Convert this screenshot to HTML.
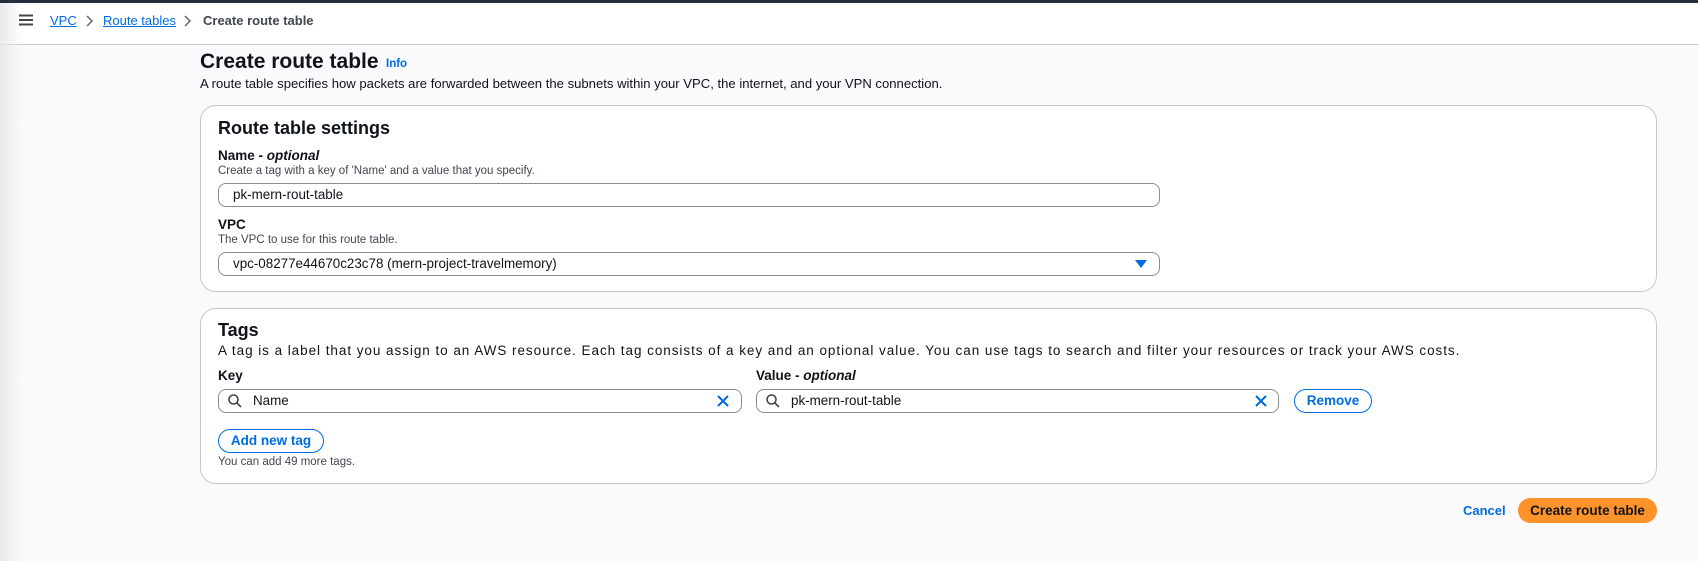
<!DOCTYPE html>
<html><head><meta charset="utf-8"><style>
*{box-sizing:border-box;margin:0;padding:0}
body{width:1698px;height:561px;overflow:hidden;background:#fafafc;font-family:"Liberation Sans",sans-serif;color:#0f141a;position:relative}
.a{position:absolute;white-space:nowrap}
.side{position:absolute;left:0;top:3px;width:22px;height:558px;background:linear-gradient(90deg,#e9e9ec,rgba(250,250,252,0))}
.top{position:absolute;left:0;top:0;width:1698px;height:3px;background:#232f3e}
.hdr{position:absolute;left:0;top:3px;width:1698px;height:42px;background:#fff;border-bottom:1px solid #c6c6cd}
.card{position:absolute;left:200px;width:1457px;background:#fff;border:1px solid #c6c6cd;border-radius:16px}
.inp{position:absolute;background:#fff;border:1px solid #8c8c94;border-radius:8px;height:24px;font-size:13.4px;line-height:22px}
.lbl{font-size:13.5px;font-weight:bold}
.hint{font-size:11.5px;color:#424650}
.btn{position:absolute;border:1.5px solid #006ce0;border-radius:20px;color:#006ce0;font-weight:bold;font-size:13.5px;text-align:center;background:#fff}
</style></head><body>
<div class="top"></div>
<div class="hdr"></div>
<div class="side"></div>
<svg class="a" style="left:19px;top:14px" width="14" height="12"><path d="M0 1.5H14M0 6H14M0 10.5H14" stroke="#424650" stroke-width="2"/></svg>
<div class="a" style="left:50px;top:13px;font-size:13px;color:#006ce0;text-decoration:underline">VPC</div>
<svg class="a" style="left:86px;top:15px" width="8" height="12"><path d="M1 1L6 6L1 11" stroke="#656871" stroke-width="1.5" fill="none"/></svg>
<div class="a" style="left:103px;top:13px;font-size:13px;color:#006ce0;text-decoration:underline">Route tables</div>
<svg class="a" style="left:184px;top:15px" width="8" height="12"><path d="M1 1L6 6L1 11" stroke="#656871" stroke-width="1.5" fill="none"/></svg>
<div class="a" style="left:203px;top:13px;font-size:13px;font-weight:bold;color:#424650">Create route table</div>

<div class="a" style="left:200px;top:50px;font-size:21px;font-weight:bold">Create route table</div>
<div class="a" style="left:386px;top:58px;font-size:11.5px;font-weight:bold;color:#006ce0">Info</div>
<div class="a" style="left:200px;top:76px;font-size:13.1px">A route table specifies how packets are forwarded between the subnets within your VPC, the internet, and your VPN connection.</div>

<div class="card" style="top:105px;height:187px"></div>
<div class="a" style="left:218px;top:118px;font-size:18px;font-weight:bold">Route table settings</div>
<div class="a lbl" style="left:218px;top:148px">Name - <i>optional</i></div>
<div class="a hint" style="left:218px;top:165px">Create a tag with a key of 'Name' and a value that you specify.</div>
<div class="inp" style="left:218px;top:183px;width:942px;padding-left:14px">pk-mern-rout-table</div>
<div class="a lbl" style="left:218px;top:217px">VPC</div>
<div class="a hint" style="left:218px;top:234px">The VPC to use for this route table.</div>
<div class="inp" style="left:218px;top:252px;width:942px;padding-left:14px">vpc-08277e44670c23c78 (mern-project-travelmemory)</div>
<svg class="a" style="left:1135px;top:260px" width="12" height="9"><path d="M0 0H12L6 8Z" fill="#006ce0"/></svg>

<div class="card" style="top:308px;height:176px"></div>
<div class="a" style="left:218px;top:320px;font-size:18px;font-weight:bold">Tags</div>
<div class="a" style="left:218px;top:343px;font-size:13.5px;letter-spacing:0.95px">A tag is a label that you assign to an AWS resource. Each tag consists of a key and an optional value. You can use tags to search and filter your resources or track your AWS costs.</div>
<div class="a lbl" style="left:218px;top:368px">Key</div>
<div class="a lbl" style="left:756px;top:368px">Value - <i>optional</i></div>
<div class="inp" style="left:218px;top:389px;width:524px;padding-left:34px">Name</div>
<div class="inp" style="left:756px;top:389px;width:523px;padding-left:34px">pk-mern-rout-table</div>
<svg class="a" style="left:228px;top:394px" width="14" height="14"><circle cx="5.5" cy="5.5" r="4.5" stroke="#424650" stroke-width="1.6" fill="none"/><path d="M9 9L13 13" stroke="#424650" stroke-width="1.6"/></svg>
<svg class="a" style="left:766px;top:394px" width="14" height="14"><circle cx="5.5" cy="5.5" r="4.5" stroke="#424650" stroke-width="1.6" fill="none"/><path d="M9 9L13 13" stroke="#424650" stroke-width="1.6"/></svg>
<svg class="a" style="left:717px;top:395px" width="12" height="12"><path d="M1 1L11 11M11 1L1 11" stroke="#006ce0" stroke-width="2"/></svg>
<svg class="a" style="left:1255px;top:395px" width="12" height="12"><path d="M1 1L11 11M11 1L1 11" stroke="#006ce0" stroke-width="2"/></svg>
<div class="btn" style="left:1294px;top:389px;width:78px;height:24px;line-height:21px">Remove</div>
<div class="btn" style="left:218px;top:429px;width:106px;height:24px;line-height:21px">Add new tag</div>
<div class="a hint" style="left:218px;top:456px">You can add 49 more tags.</div>

<div class="a" style="left:1463px;top:503px;font-size:13px;font-weight:bold;color:#006ce0">Cancel</div>
<div class="a" style="left:1518px;top:498px;width:139px;height:25px;border-radius:20px;background:#fe932c;font-size:13.5px;font-weight:bold;text-align:center;line-height:25px">Create route table</div>
</body></html>
